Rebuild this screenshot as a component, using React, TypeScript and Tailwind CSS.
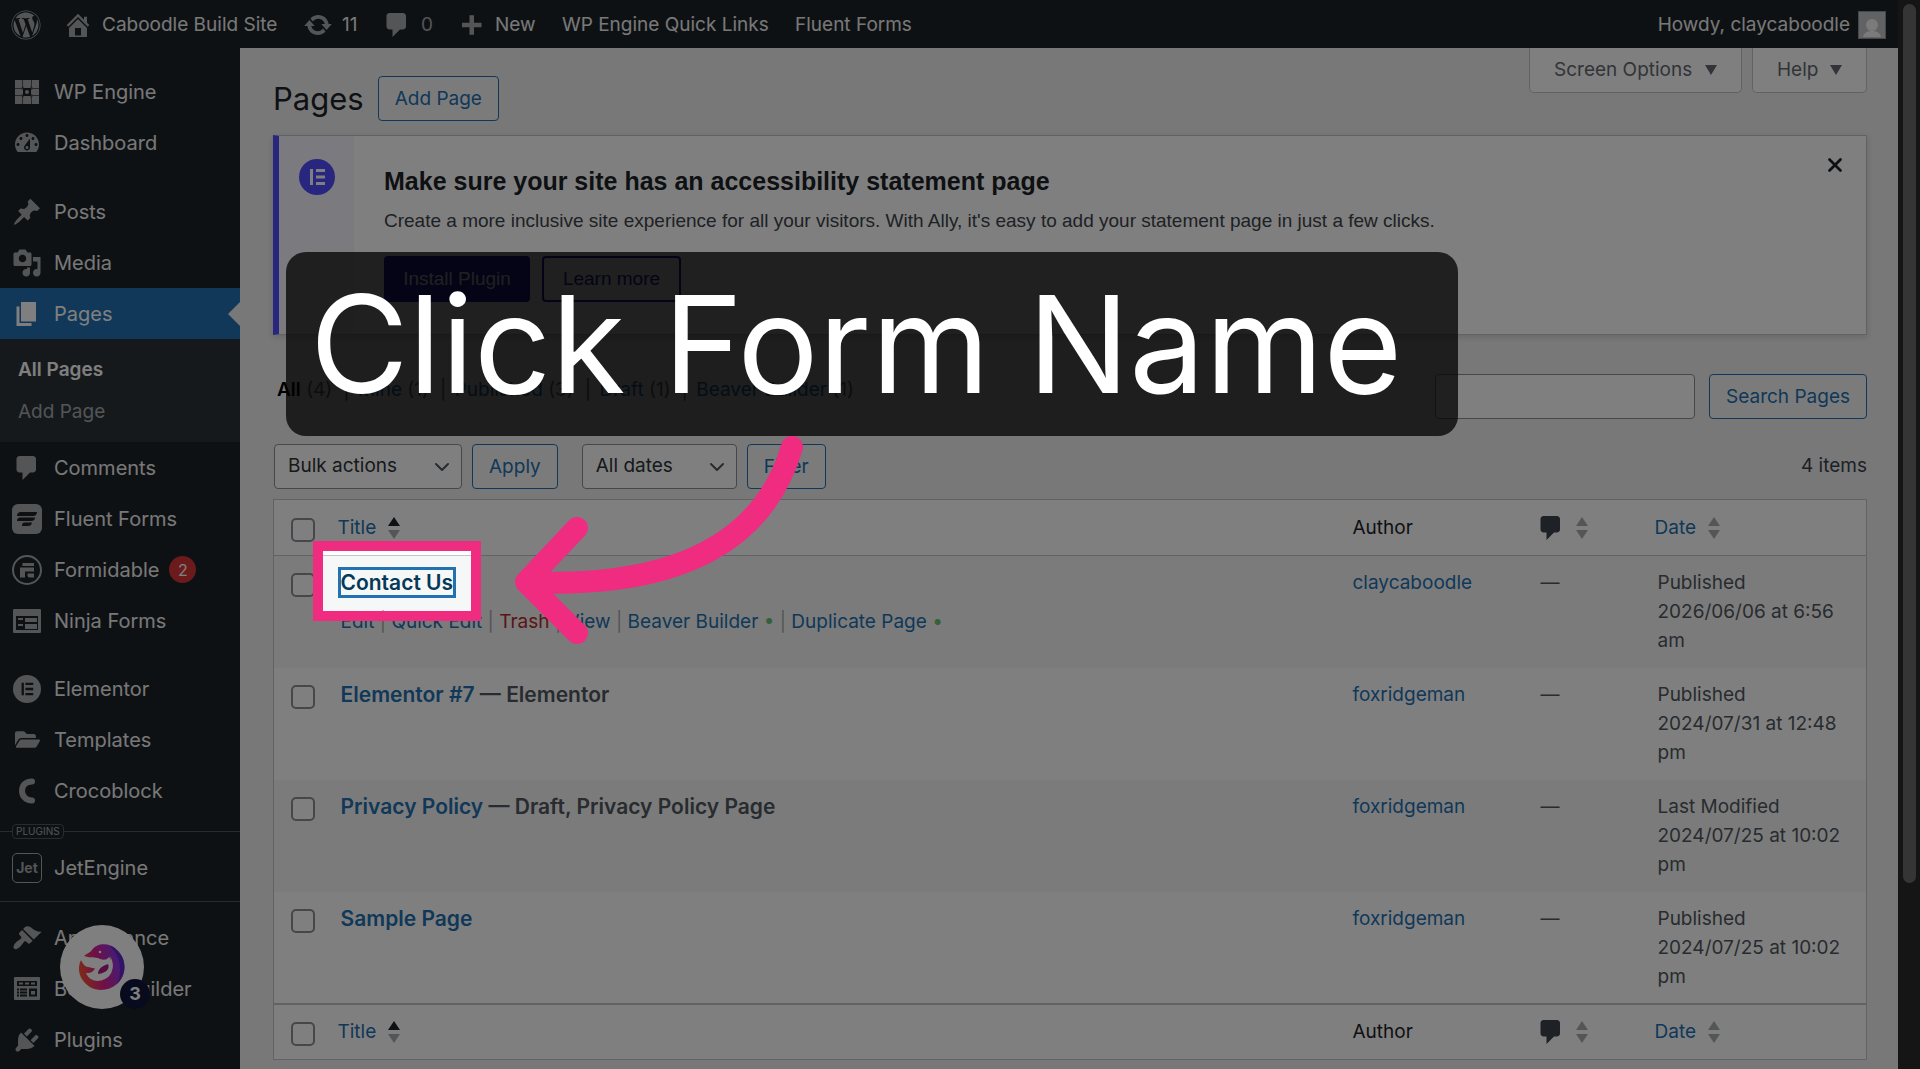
import type { ReactNode } from "react";
import { ChevronDown, X } from "lucide-react";
import { FaFolderOpen, FaWordpress } from "react-icons/fa";

function Dashicon({ d, className = "" }: { d: string; className?: string }) {
  return (
    <svg viewBox="0 0 20 20" fill="currentColor" className={`size-[30px] shrink-0 ${className}`} aria-hidden="true">
      <path d={d} />
    </svg>
  );
}

const paths = {
  home: "M16 8.5l1.53 1.53-1.06 1.06L10 4.6l-6.47 6.49-1.06-1.06L10 2.5l4 4v-2h2v4zm-6-2.46l6 5.99V18H4v-5.97zM12 17v-5H8v5h4z",
  update:
    "M10.2 3.28c3.53 0 6.43 2.61 6.92 6h2.08l-3.5 4-3.5-4h2.32c-.45-1.97-2.21-3.45-4.32-3.45-1.45 0-2.73.71-3.54 1.78L4.95 5.66C6.23 4.2 8.11 3.28 10.2 3.28zm-.4 13.44c-3.52 0-6.43-2.61-6.92-6H.8l3.5-4c1.17 1.33 2.33 2.67 3.5 4H5.48c.45 1.97 2.21 3.45 4.32 3.45 1.45 0 2.73-.71 3.54-1.78l1.71 1.95c-1.28 1.46-3.15 2.38-5.25 2.38z",
  comment: "M5 2h9c1.1 0 2 .9 2 2v7c0 1.1-.9 2-2 2h-2l-5 5v-5H5c-1.1 0-2-.9-2-2V4c0-1.1.9-2 2-2z",
  plus: "M17 8.500v3h-5v5H9v-5H4v-3h5v-5h3v5z",
  dashboard:
    "M3.76 16h12.48c1.1-1.37 1.76-3.11 1.76-5 0-4.42-3.58-8-8-8s-8 3.58-8 8c0 1.89.66 3.63 1.76 5zM10 4c.55 0 1 .45 1 1s-.45 1-1 1-1-.45-1-1 .45-1 1-1zM6 6c.55 0 1 .45 1 1s-.45 1-1 1-1-.45-1-1 .45-1 1-1zm8 0c.55 0 1 .45 1 1s-.45 1-1 1-1-.45-1-1 .45-1 1-1zm-5.37 5.55L12 7v6c0 1.1-.9 2-2 2s-2-.9-2-2c0-.57.24-1.08.63-1.45zM4 10c.55 0 1 .45 1 1s-.45 1-1 1-1-.45-1-1 .45-1 1-1zm12 0c.55 0 1 .45 1 1s-.45 1-1 1-1-.45-1-1 .45-1 1-1zm-5 3c0-.55-.45-1-1-1s-1 .45-1 1 .45 1 1 1 1-.45 1-1z",
  pin: "M10.44 3.02l1.82-1.82 6.36 6.35-1.83 1.82c-1.05-.68-2.48-.57-3.41.36l-.75.75c-.92.93-1.04 2.35-.35 3.41l-1.83 1.82-2.41-2.41-2.8 2.79c-.42.42-3.38 2.71-3.8 2.29s1.86-3.39 2.28-3.81l2.79-2.79L4.1 9.36l1.83-1.82c1.05.69 2.48.57 3.4-.36l.75-.75c.93-.92 1.05-2.35.36-3.41z",
  media:
    "M13 11V4c0-.55-.45-1-1-1h-1.67L9 1H5L3.67 3H2c-.55 0-1 .45-1 1v7c0 .55.45 1 1 1h10c.55 0 1-.45 1-1zM7 4.5c1.38 0 2.5 1.12 2.5 2.5S8.38 9.5 7 9.5 4.5 8.38 4.5 7 5.62 4.5 7 4.5zM14 6h5v10.5c0 1.38-1.12 2.5-2.5 2.5S14 17.88 14 16.5s1.12-2.5 2.5-2.5c.17 0 .34.02.5.05V9h-3V6zm-4 8.05V13h2v3.5c0 1.38-1.12 2.5-2.5 2.5S7 17.88 7 16.5 8.12 14 9.5 14c.17 0 .34.02.5.05z",
  page: "M6 15V2h10v13H6zm-1 1h8v2H3V5h2v11z",
  appearance:
    "M14.48 11.06L7.41 3.99l1.5-1.5c.5-.56 2.3-.47 3.51.32 1.21.8 1.43 1.28 2.91 2.1 1.18.64 2.45 1.26 4.45.85zm-.71.71L6.7 4.7 4.93 6.47c-.39.39-.39 1.02 0 1.41l1.06 1.06c.39.39.39 1.03 0 1.42-.6.6-1.43 1.11-2.21 1.69-.35.26-.7.53-1.01.84C1.43 14.23.4 16.08 1.4 17.07c.99 1 2.84-.03 4.18-1.36.31-.31.58-.66.85-1.02.57-.78 1.08-1.61 1.69-2.21.39-.39 1.02-.39 1.41 0l1.06 1.06c.39.39 1.02.39 1.41 0z",
  plugins:
    "M13.11 4.36L9.87 7.6 8 5.73l3.24-3.24c.35-.34 1.05-.2 1.56.32.52.51.66 1.21.31 1.55zm-8 1.77l.91-1.12 9.01 9.01-1.19.84c-.71.71-2.63 1.16-3.82 1.16H6.14L4.9 17.26c-.59.59-1.54.59-2.12 0-.59-.58-.59-1.53 0-2.12l1.24-1.24v-3.88c0-1.13.4-3.19 1.09-3.89zm7.26 3.97l3.24-3.24c.34-.35 1.04-.21 1.55.31.52.51.66 1.21.31 1.55l-3.24 3.25z",
};

function WpEngineIcon() {
  return (
    <svg viewBox="0 0 24 24" className="size-6" fill="currentColor" aria-hidden="true">
      <path d="M0 0h24v24H0z" opacity="0.35" />
      <path d="M0 0h7v7l-1 1H0zM8 0h8v6l-1 2H9L8 6zM17 0h7v8h-6l-1-1zM0 9h6l2 1v4l-2 1H0zM18 9h6v6h-6l-2-1v-4zM0 16h6l1 1v7H0zM9 16h6l1 2v6H8v-6zM18 16h6v8h-7v-7z" />
      <path d="M8 8h8v8H8z" fill="#1d2327" />
      <circle cx="12" cy="12" r="2" />
    </svg>
  );
}

function FluentIcon() {
  return (
    <svg viewBox="0 0 30 30" className="size-[30px]" aria-hidden="true">
      <rect width="30" height="30" rx="6" fill="currentColor" />
      <path
        d="M9 8h16c0 2.500-1.500 4-4 4H5c0-2.500 1.500-4 4-4zM8 13.500h15c0 2.500-1.500 3.500-4 3.500H5c0-2 1-3.500 3-3.500zM12.500 18.500h7.500c-.5 2.500-1.500 3.500-4 3.500h-6c0-2 .5-3.500 2.500-3.500z"
        fill="#1d2327"
      />
    </svg>
  );
}

function FormidableIcon() {
  return (
    <svg viewBox="0 0 30 30" className="size-[30px]" fill="none" aria-hidden="true">
      <circle cx="15" cy="15" r="14" stroke="currentColor" strokeWidth="2" />
      <path d="M11 8h11v3H11c-1 0-1-3 0-3zM8 12.500h14v4H13v6H8zM15.500 18.500H22v4h-4.500c-1 0-2-1-2-2z" fill="currentColor" />
    </svg>
  );
}

function NinjaIcon() {
  return (
    <svg viewBox="0 0 28 24" className="h-6 w-7" aria-hidden="true">
      <rect width="28" height="24" rx="1" fill="currentColor" />
      <path d="M3 7h22v14H3z" fill="#1d2327" />
      <path d="M5 9h5v2H5zM12 9h12v4H12zM5 15h5v2H5zM12 15h12v5H12z" fill="currentColor" />
    </svg>
  );
}

function ElementorIcon() {
  return (
    <svg viewBox="0 0 36 36" className="size-[28px]" aria-hidden="true">
      <circle cx="18" cy="18" r="18" fill="currentColor" />
      <path d="M11 10h3v16h-3zM16 10h10v3H16zM16 16.500h10v3H16zM16 23h10v3H16z" fill="#1d2327" />
    </svg>
  );
}

function CrocoblockIcon() {
  return (
    <svg viewBox="0 0 30 30" className="size-[30px]" fill="none" aria-hidden="true">
      <path d="M20 5.500C13 5.500 10 10 10 15s4 9.500 10 9.500" stroke="currentColor" strokeWidth="6" strokeLinecap="round" />
    </svg>
  );
}

function JetIcon() {
  return (
    <span className="flex size-[30px] items-center justify-center rounded-[5px] border border-[#a7aaad] text-[14px] font-bold leading-none">
      Jet
    </span>
  );
}

function BeaverIcon() {
  return (
    <svg viewBox="0 0 26 23" className="h-[23px] w-[26px]" aria-hidden="true">
      <rect width="26" height="23" rx="1" fill="currentColor" />
      <path
        d="M3 4h20v5H3zM3 11.500h2v2H3zM3 14.500h2v2H3zM3 17.500h2v2H3zM6 11.500h7v2H6zM6 14.500h7v2H6zM6 17.500h7v2H6zM15 11.500h8v8h-8z"
        fill="#1d2327"
      />
      <path d="M5 5.500h4v2H5zM11 5.500h4v2h-4zM17 5.500h4v2h-4zM17 14h4v3.500h-4z" fill="currentColor" />
    </svg>
  );
}

type MenuItem = { label: string; icon: ReactNode; badge?: number };

const menuTop: MenuItem[] = [
  { label: "WP Engine", icon: <WpEngineIcon /> },
  { label: "Dashboard", icon: <Dashicon d={paths.dashboard} /> },
];
const menuContent: MenuItem[] = [
  { label: "Posts", icon: <Dashicon d={paths.pin} /> },
  { label: "Media", icon: <Dashicon d={paths.media} /> },
];
const menuForms: MenuItem[] = [
  { label: "Comments", icon: <Dashicon d={paths.comment} /> },
  { label: "Fluent Forms", icon: <FluentIcon /> },
  { label: "Formidable", icon: <FormidableIcon />, badge: 2 },
  { label: "Ninja Forms", icon: <NinjaIcon /> },
];
const menuBuilders: MenuItem[] = [
  { label: "Elementor", icon: <ElementorIcon /> },
  { label: "Templates", icon: <FaFolderOpen size={25} /> },
  { label: "Crocoblock", icon: <CrocoblockIcon /> },
];
const menuBottom: MenuItem[] = [
  { label: "Appearance", icon: <Dashicon d={paths.appearance} /> },
  { label: "Beaver Builder", icon: <BeaverIcon /> },
  { label: "Plugins", icon: <Dashicon d={paths.plugins} /> },
];

const pages = [
  { title: "Contact Us", state: "", author: "claycaboodle", status: "Published", date: "2026/06/06 at 6:56 am", active: true },
  { title: "Elementor #7", state: "Elementor", author: "foxridgeman", status: "Published", date: "2024/07/31 at 12:48 pm" },
  {
    title: "Privacy Policy",
    state: "Draft, Privacy Policy Page",
    author: "foxridgeman",
    status: "Last Modified",
    date: "2024/07/25 at 10:02 pm",
  },
  { title: "Sample Page", state: "", author: "foxridgeman", status: "Published", date: "2024/07/25 at 10:02 pm" },
];

const views = [
  { label: "Mine", count: 1 },
  { label: "Published", count: 3 },
  { label: "Draft", count: 1 },
  { label: "Beaver Builder", count: 1 },
];

function MenuLink({ item }: { item: MenuItem }) {
  return (
    <a href="#" className="flex h-[51px] items-center text-[#f0f0f1]">
      <span className="flex w-[54px] shrink-0 justify-center text-[#a7aaad]">{item.icon}</span>
      {item.label}
      {item.badge && (
        <span className="ml-2.5 flex size-[27px] items-center justify-center rounded-full bg-[#d63638] text-base text-white">
          {item.badge}
        </span>
      )}
    </a>
  );
}

function MenuGroup({ items }: { items: MenuItem[] }) {
  return (
    <>
      {items.map((item) => (
        <MenuLink key={item.label} item={item} />
      ))}
    </>
  );
}

function AdminBar() {
  return (
    <header className="flex h-12 items-center bg-[#1d2327] pt-0.5 text-[19px] text-[#f0f0f1]">
      <a href="#" aria-label="About WordPress" className="flex w-[51px] justify-center text-[#a7aaad]">
        <FaWordpress size={30} />
      </a>
      <a href="#" className="ml-3 flex w-[236px] items-center gap-[9px]">
        <Dashicon d={paths.home} className="text-[#a7aaad]" />
        Caboodle Build Site
      </a>
      <a href="#" className="ml-1 flex w-[79px] items-center gap-[9px]">
        <Dashicon d={paths.update} className="text-[#a7aaad]" />
        11
      </a>
      <a href="#" className="flex w-[74px] items-center gap-[9px] text-[#a7aaad]">
        <Dashicon d={paths.comment} />
        0
      </a>
      <a href="#" className="flex w-[106px] items-center gap-[9px]">
        <Dashicon d={paths.plus} className="text-[#a7aaad]" />
        New
      </a>
      <a href="#" className="w-[233px]">
        WP Engine Quick Links
      </a>
      <a href="#">Fluent Forms</a>
      <a href="#" className="mr-3 ml-auto flex items-center gap-2">
        Howdy, claycaboodle
        <svg viewBox="0 0 28 28" className="size-7" aria-hidden="true">
          <path d="M0 0h28v28H0z" fill="#8c8f94" />
          <path d="M1 1h26v26H1z" fill="#c3c4c7" />
          <circle cx="14" cy="14" r="6" fill="#f6f7f7" />
          <path d="M5 26c1-4 4-6 9-6s8 2 9 6z" fill="#f6f7f7" />
        </svg>
      </a>
    </header>
  );
}

function Sidebar() {
  return (
    <nav className="flex w-60 shrink-0 flex-col bg-[#1d2327] pt-[18px] text-xl">
      <MenuGroup items={menuTop} />
      <div className="h-[18px]" />
      <MenuGroup items={menuContent} />
      <a href="#" className="flex h-[51px] items-center bg-[#2271b1] text-white">
        <span className="flex w-[54px] justify-center">
          <Dashicon d={paths.page} />
        </span>
        Pages
        <svg viewBox="0 0 12 24" className="ml-auto h-6 w-3" fill="#f0f0f1" aria-hidden="true">
          <path d="M12 0v24L0 12z" />
        </svg>
      </a>
      <div className="flex h-[103px] flex-col bg-[#2c3338] pt-2.5 pl-[18px] text-[19px]">
        <a href="#" className="flex h-[42px] items-center font-semibold text-white">
          All Pages
        </a>
        <a href="#" className="flex h-[42px] items-center text-[#a7aaad]">
          Add Page
        </a>
      </div>
      <MenuGroup items={menuForms} />
      <div className="h-[17px]" />
      <MenuGroup items={menuBuilders} />
      <div className="flex h-[26px] items-center pt-1">
        <span className="h-px w-3 bg-[#50575e]" />
        <span className="rounded border border-[#50575e] px-[3px] text-[10px] leading-[13px] text-[#a7aaad]">PLUGINS</span>
        <span className="h-px grow bg-[#50575e]" />
      </div>
      <MenuLink item={{ label: "JetEngine", icon: <JetIcon /> }} />
      <div className="mt-2 mb-2.5 h-px bg-[#50575e]" />
      <MenuGroup items={menuBottom} />
    </nav>
  );
}

function Notice() {
  return (
    <section className="flex h-[200px] border border-l-[6px] border-[#c3c4c7] border-l-[#524cff] bg-white font-['Liberation_Sans',Arial,sans-serif] shadow-[0_2px_6px_rgba(0,0,0,0.15)]">
      <div className="flex w-[75px] justify-center bg-[#f6f6ff] pt-[23px]">
        <svg viewBox="0 0 36 36" className="size-9" aria-hidden="true">
          <circle cx="18" cy="18" r="18" fill="#524cff" />
          <path d="M11 10h3v16h-3zM17 10h9v3h-9zM17 16.500h9v3h-9zM17 23h9v3h-9z" fill="#fff" />
        </svg>
      </div>
      <div className="grow pt-[27px] pl-[30px]">
        <h2 className="text-[25px] leading-9 font-bold text-[#1d2327]">Make sure your site has an accessibility statement page</h2>
        <p className="mt-1.5 text-[19px] leading-8 text-[#3c434a]">
          Create a more inclusive site experience for all your visitors. With Ally, it&apos;s easy to add your statement page in
          just a few clicks.
        </p>
        <div className="mt-[19px] flex gap-3">
          <button className="h-[46px] w-[146px] rounded-[4px] bg-[#2f1bb0] text-[19px] text-white">Install Plugin</button>
          <button className="h-[46px] w-[139px] rounded-[4px] border-2 border-[#2f1bb0] text-[19px] text-[#2f1bb0]">
            Learn more
          </button>
        </div>
      </div>
      <button aria-label="Dismiss notice" className="mt-[15px] mr-[17px] flex size-7 items-center justify-center text-[#1d2327]">
        <X size={22} strokeWidth={3} />
      </button>
    </section>
  );
}

function Sorter({ asc = false }: { asc?: boolean }) {
  return (
    <svg viewBox="0 0 12 24" className="h-6 w-3" aria-hidden="true">
      <path d="M6 1l6 9H0z" fill={asc ? "#1d2327" : "#a7aaad"} />
      <path d="M6 23l6-9H0z" fill="#a7aaad" />
    </svg>
  );
}

const checkboxClass = "block size-6 appearance-none rounded-[5px] border-2 border-[#8c8f94] bg-white checked:bg-[#2271b1]";

function HeadingRow({ className = "" }: { className?: string }) {
  return (
    <tr className={`h-14 bg-white text-left ${className}`}>
      <th className="pl-[17px]">
        <input type="checkbox" aria-label="Select All" className={`mt-1 ${checkboxClass}`} />
      </th>
      <th className="pl-3 font-normal">
        <a href="#" className="flex items-center gap-3 text-[#2271b1]">
          Title
          <Sorter asc />
        </a>
      </th>
      <th className="pl-[15px] font-normal text-[#1d2327]">Author</th>
      <th className="pl-2.5 font-normal">
        <a href="#" aria-label="Comments" className="flex items-center gap-2.5">
          <Dashicon d={paths.comment} className="text-[#3c434a]" />
          <Sorter />
        </a>
      </th>
      <th className="pl-3 font-normal">
        <a href="#" className="flex items-center gap-3 text-[#2271b1]">
          Date
          <Sorter />
        </a>
      </th>
    </tr>
  );
}

function Divider() {
  return <span className="text-[#a7aaad]"> | </span>;
}

function RowActions() {
  return (
    <div className="mt-2.5 text-[#2271b1]">
      <a href="#">Edit</a>
      <Divider />
      <a href="#">Quick Edit</a>
      <Divider />
      <a href="#" className="text-[#b32d2e]">
        Trash
      </a>
      <Divider />
      <a href="#">View</a>
      <Divider />
      <a href="#">
        Beaver Builder <span className="text-[#6bc373]">•</span>
      </a>{" "}
      <Divider />
      <a href="#">
        Duplicate Page <span className="text-[#6bc373]">•</span>
      </a>
    </div>
  );
}

function PagesTable() {
  return (
    <table className="mt-2.5 w-full table-fixed border-collapse border border-[#c3c4c7] text-[19px] leading-[29px]">
      <colgroup>
        <col className="w-[52px]" />
        <col />
        <col className="w-[188px]" />
        <col className="w-[117px]" />
        <col className="w-[224px]" />
      </colgroup>
      <thead>
        <HeadingRow className="border-b border-[#c3c4c7]" />
      </thead>
      <tbody className="text-[#50575e]">
        {pages.map((page) => (
          <tr key={page.title} className="h-28 bg-white align-top odd:bg-[#f6f7f7]">
            <td className="pt-[17px] pl-[17px]">
              <input type="checkbox" aria-label={`Select ${page.title}`} className={checkboxClass} />
            </td>
            <td className="pt-3 pl-[15px]">
              <strong className="block text-[21px] leading-[29px] font-semibold">
                <a href="#" className={page.active ? "text-[#043959] shadow-[0_0_0_3px_#2271b1]" : "text-[#2271b1]"}>
                  {page.title}
                </a>
                {page.state && ` — ${page.state}`}
              </strong>
              {page.active && <RowActions />}
            </td>
            <td className="pt-3 pl-[15px]">
              <a href="#" className="text-[#2271b1]">
                {page.author}
              </a>
            </td>
            <td className="pt-3 pl-[15px]">—</td>
            <td className="px-[15px] pt-3">
              {page.status}
              <br />
              {page.date}
            </td>
          </tr>
        ))}
      </tbody>
      <tfoot>
        <HeadingRow className="border-t-2 border-[#c3c4c7]" />
      </tfoot>
    </table>
  );
}

const outlineButton = "h-[45px] rounded-[4px] border border-[#2271b1] bg-[#f6f7f7] px-4 pt-0.5 text-[19px] text-[#2271b1]";

function FilterSelect({ label, option, className }: { label: string; option: string; className: string }) {
  return (
    <span className={`relative ${className}`}>
      <select
        aria-label={label}
        className="h-[45px] w-full appearance-none rounded-[4px] border border-[#8c8f94] bg-white pl-[13px] text-[#2c3338]"
      >
        <option>{option}</option>
      </select>
      <ChevronDown size={24} className="pointer-events-none absolute top-[11px] right-2 text-[#50575e]" />
    </span>
  );
}

function Toolbar() {
  return (
    <div className="mt-[25px] flex items-center pl-px text-[19px]">
      <FilterSelect label="Select bulk action" option="Bulk actions" className="w-[188px]" />
      <button className={`ml-2.5 ${outlineButton}`}>Apply</button>
      <FilterSelect label="Filter by date" option="All dates" className="ml-6 w-[155px]" />
      <button className={`ml-2.5 ${outlineButton}`}>Filter</button>
      <span className="ml-auto text-[#3c434a]">4 items</span>
    </div>
  );
}

function ScreenTab({ label, className }: { label: string; className: string }) {
  return (
    <button
      className={`flex h-[45px] items-center justify-between rounded-b-[5px] border border-t-0 border-[#c3c4c7] bg-white px-6 text-[19px] text-[#646970] ${className}`}
    >
      {label}
      <svg viewBox="0 0 12 10" className="h-2.5 w-3" fill="currentColor" aria-hidden="true">
        <path d="M0 0h12L6 10z" />
      </svg>
    </button>
  );
}

function Content() {
  return (
    <main className="min-w-0 grow bg-[#f0f0f1] pr-[31px] pl-[33px]">
      <div className="flex h-[87px] items-start">
        <h1 className="pt-[29px] text-[31px] leading-[44px] text-[#1d2327]">Pages</h1>
        <button className={`mt-7 ml-3.5 ${outlineButton}`}>Add Page</button>
        <div className="ml-auto flex gap-2.5">
          <ScreenTab label="Screen Options" className="w-[213px]" />
          <ScreenTab label="Help" className="w-[115px]" />
        </div>
      </div>
      <Notice />
      <div className="mt-[39px] flex h-[45px] items-start text-[19px]">
        <ul className="flex gap-2 pt-0.5 pl-1 text-[#646970]">
          <li>
            <a href="#">
              <b className="font-semibold text-black">All</b> (4)
            </a>
          </li>
          {views.map((view) => (
            <li key={view.label}>
              <span className="px-[3px]">|</span>{" "}
              <a href="#">
                <span className="text-[#2271b1]">{view.label}</span> ({view.count})
              </a>
            </li>
          ))}
        </ul>
        <input
          type="search"
          aria-label="Search Pages"
          className="mr-3.5 ml-auto h-[45px] w-[260px] rounded-[4px] border border-[#8c8f94] bg-white px-3"
        />
        <button className={outlineButton}>Search Pages</button>
      </div>
      <Toolbar />
      <PagesTable />
    </main>
  );
}

function ChatWidget() {
  return (
    <button
      aria-label="Open notifications, 3 unread"
      className="absolute top-[925px] left-[60px] flex size-[84px] items-center justify-center rounded-full bg-white"
    >
      <svg viewBox="0 0 46 46" className="size-[46px]" aria-hidden="true">
        <defs>
          <linearGradient id="dolphin" x1="0" y1="0.7" x2="1" y2="0.4">
            <stop offset="0" stopColor="#ff5a2a" />
            <stop offset="0.45" stopColor="#e0208c" />
            <stop offset="1" stopColor="#7a3cff" />
          </linearGradient>
        </defs>
        <path
          d="M5 12c3-3 6-3 8-6C18-1 30-2 38 6c10 9 10 25 0 34-9 8-24 8-32-1C0 33-2 24 2 16c2 4 4 7 7 7s5 2 7 1c-2 5-6 5-9 5 3 8 12 10 19 6 8-4 10-14 4-22-3 4-7 3-11 1-5-1-9 0-14-2z"
          fill="url(#dolphin)"
        />
        <path d="M19 30c0-6 5-8 10-10 2 4-1 9-10 10z" fill="#b0188c" />
        <path d="M38 6c10 9 10 25 0 34 4-8 6-25-7-38 2 0 5 2 7 4z" fill="#4a1fb0" opacity="0.6" />
        <path d="M31 12c5 8 3 16-3 21 4-7 5-13 3-21z" fill="#fff" />
        <circle cx="21" cy="8" r="1.300" fill="#fff" />
      </svg>
      <span className="absolute right-[-6px] bottom-0 flex size-[30px] items-center justify-center rounded-full bg-[#10153a] text-lg font-bold text-white">
        3
      </span>
    </button>
  );
}

// Dims everything but the highlighted link, then points at it from the caption.
function Walkthrough() {
  return (
    <>
      <div className="absolute top-[551px] left-[323px] h-[60px] w-[148px] shadow-[0_0_0_3000px_rgba(0,0,0,0.5)]" />
      <div className="absolute top-[541px] left-[313px] h-20 w-[168px] border-10 border-[#ef2c80]" />
      <p className="absolute top-[252px] left-[286px] flex h-[184px] w-[1172px] items-center rounded-[20px] bg-black/75 pl-6 text-[135px] leading-none whitespace-nowrap text-white">
        Click Form Name
      </p>
      <svg
        viewBox="500 430 320 230"
        className="absolute top-[430px] left-[500px] h-[230px] w-[320px]"
        fill="none"
        stroke="#ef2c80"
        strokeWidth="22"
        strokeLinecap="round"
        strokeLinejoin="round"
        aria-hidden="true"
      >
        <path d="M792 447C770 522 705 590 526 582M577 528L526 582L577 633" />
      </svg>
    </>
  );
}

export default function App() {
  return (
    <div className="relative flex min-h-screen overflow-hidden bg-[#f0f0f1] font-[Inter,'Noto_Sans',sans-serif]">
      <div className="flex min-w-0 grow flex-col">
        <AdminBar />
        <div className="flex grow">
          <Sidebar />
          <Content />
        </div>
      </div>
      <div className="w-[22px] shrink-0 bg-[#2b2b2b] pt-1 pl-[5px]">
        <div className="h-[879px] w-[13px] rounded-full bg-[#6b6b6b]" />
      </div>
      <ChatWidget />
      <Walkthrough />
    </div>
  );
}
